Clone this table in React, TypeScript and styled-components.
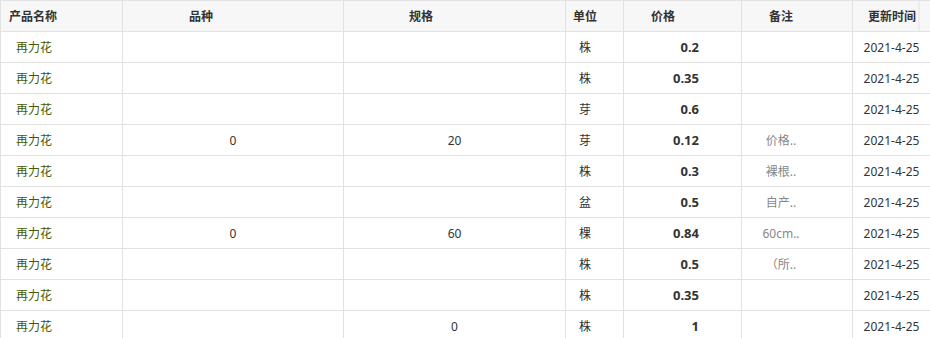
import React from "react";
import styled, { createGlobalStyle } from "styled-components";

const Global = createGlobalStyle`
  html, body { margin: 0; padding: 0; background: #fff; }
  body { font-family: "Noto Sans", "Noto Sans CJK SC", sans-serif; }
`;

const Table = styled.table`
  width: 930px;
  table-layout: fixed;
  border-collapse: collapse;
  font-size: 12px;
  color: #333;
`;

const HeadCell = styled.th<{ $pad: number; $gutter?: boolean }>`
  height: 30px;
  padding: 0 0 0 ${(p) => p.$pad}px;
  text-align: left;
  font-weight: bold;
  font-size: 12px;
  color: #333;
  background: ${(p) =>
    p.$gutter
      ? "linear-gradient(to right, transparent 65px, #e2e2e2 65px, #e2e2e2 66px, transparent 66px), #f7f7f7"
      : "#f7f7f7"};
  border: 1px solid #e2e2e2;
  white-space: nowrap;
`;

type Align = "left" | "center" | "right";

const Cell = styled.td<{ $align: Align; $pl?: number; $pr?: number }>`
  height: 30px;
  padding: 0 ${(p) => p.$pr ?? 0}px 0 ${(p) => p.$pl ?? 0}px;
  text-align: ${(p) => p.$align};
  border: 1px solid #e2e2e2;
  white-space: nowrap;
  overflow: hidden;
`;

const Name = styled.span`
  color: #425a06;
`;

const Price = styled.span`
  font-weight: bold;
  font-size: 13px;
  color: #333;
`;

const Note = styled.span`
  color: #888;
`;

const heads = [
  { t: "产品名称", pad: 8 },
  { t: "品种", pad: 66 },
  { t: "规格", pad: 65 },
  { t: "单位", pad: 7 },
  { t: "价格", pad: 27 },
  { t: "备注", pad: 27 },
  { t: "更新时间", pad: 15, gutter: true },
];

const widths = [122, 221, 222, 58, 118, 111, 78];

type Row = [string, string, string, string, string];

const rows: Row[] = [
  ["", "", "株", "0.2", ""],
  ["", "", "株", "0.35", ""],
  ["", "", "芽", "0.6", ""],
  ["0", "20", "芽", "0.12", "价格.."],
  ["", "", "株", "0.3", "裸根.."],
  ["", "", "盆", "0.5", "自产.."],
  ["0", "60", "棵", "0.84", "60cm.."],
  ["", "", "株", "0.5", "（所.."],
  ["", "", "株", "0.35", ""],
  ["", "0", "株", "1", ""],
];

export default function App() {
  return (
    <>
      <Global />
      <Table>
        <colgroup>
          {widths.map((w, i) => (
            <col key={i} style={{ width: w }} />
          ))}
        </colgroup>
        <thead>
          <tr>
            {heads.map((h) => (
              <HeadCell key={h.t} $pad={h.pad} $gutter={h.gutter}>
                {h.t}
              </HeadCell>
            ))}
          </tr>
        </thead>
        <tbody>
          {rows.map((r, i) => (
            <tr key={i}>
              <Cell $align="left" $pl={15}>
                <Name>再力花</Name>
              </Cell>
              <Cell $align="center">{r[0]}</Cell>
              <Cell $align="center">{r[1]}</Cell>
              <Cell $align="left" $pl={13}>
                {r[2]}
              </Cell>
              <Cell $align="right" $pr={42}>
                <Price>{r[3]}</Price>
              </Cell>
              <Cell $align="center" $pr={32}>
                <Note>{r[4]}</Note>
              </Cell>
              <Cell $align="center">2021-4-25</Cell>
            </tr>
          ))}
        </tbody>
      </Table>
    </>
  );
}
